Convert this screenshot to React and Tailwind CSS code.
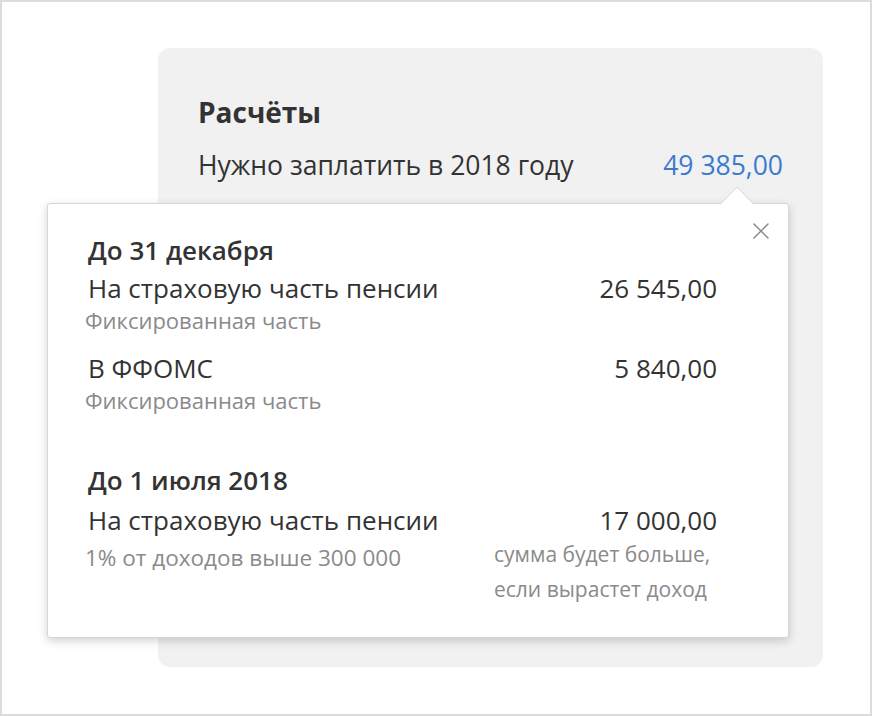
import { X } from 'lucide-react';

const font = { fontFamily: '"Open Sans", "Noto Sans", sans-serif' };

function Row({ label, amount }) {
  return (
    <div className="flex justify-between items-baseline text-[26px] leading-[40px] text-[#333]">
      <span>{label}</span>
      <span>{amount}</span>
    </div>
  );
}

function Note({ children }) {
  return <div className="-ml-[3px] text-[22px] leading-[24px] text-[#8a8a8a]">{children}</div>;
}

export default function App() {
  return (
    <div className="relative w-[872px] h-[716px] border-2 border-[#dcdcdc] bg-white overflow-hidden" style={font}>
      {/* background card */}
      <div className="ml-[156px] mt-[46px] w-[665px] h-[619px] rounded-[12px] bg-[#f1f1f1] pt-[44px] px-[40px]">
        <h2 className="text-[28px] leading-[40px] font-bold text-[#333]">Расчёты</h2>
        <div className="mt-[13px] flex justify-between text-[26.5px] leading-[40px] text-[#333]">
          <span>Нужно заплатить в 2018 году</span>
          <span className="text-[#3a7bd0]">49 385,00</span>
        </div>
      </div>

      {/* popover */}
      <div className="absolute left-[45px] top-[201px] w-[742px] h-[435px] bg-white rounded-[3px] border border-[#d6d6d6] shadow-[0_3px_10px_rgba(0,0,0,0.18)] pl-[40px] pr-[71px] pt-[28px]">
        <svg className="absolute -top-[18px] left-[672px]" width="34" height="19" viewBox="0 0 34 19">
          <path d="M0 18.5 L17 1 L34 18.5" fill="white" stroke="#d6d6d6" strokeWidth="1" />
        </svg>
        <button className="absolute right-[13px] top-[13px] text-[#8a8a8a]">
          <X size={28} strokeWidth={1.3} />
        </button>

        <h3 className="text-[26px] leading-[36px] font-semibold text-[#333]">До 31 декабря</h3>
        <Row label="На страховую часть пенсии" amount="26 545,00" />
        <Note>Фиксированная часть</Note>

        <div className="mt-[16px]">
          <Row label="В ФФОМС" amount="5 840,00" />
          <Note>Фиксированная часть</Note>
        </div>

        <h3 className="mt-[50px] text-[26px] leading-[36px] font-semibold text-[#333]">До 1 июля 2018</h3>
        <div className="mt-[2px]">
          <Row label="На страховую часть пенсии" amount="17 000,00" />
        </div>
        <div className="flex justify-between items-start text-[#8a8a8a]">
          <span className="-ml-[3px] text-[22.5px] leading-[36px]">1% от доходов выше 300 000</span>
          <span className="-mr-[9px] -mt-[3px] w-[232px] text-[21px] leading-[35px]">
            сумма будет больше,
            <br />
            если вырастет доход
          </span>
        </div>
      </div>
    </div>
  );
}
